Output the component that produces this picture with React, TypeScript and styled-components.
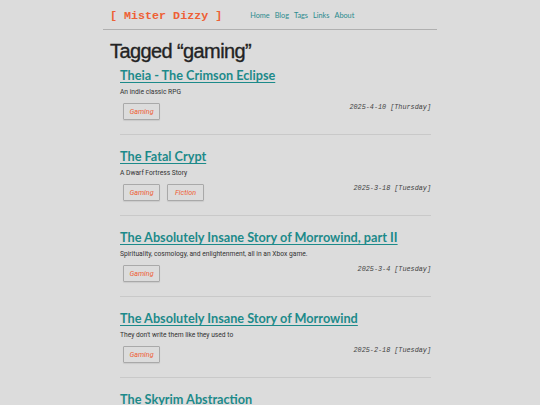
import React from "react";
import styled, { createGlobalStyle } from "styled-components";

const Global = createGlobalStyle`
  html, body { margin: 0; padding: 0; background: #dcdcdc; }
  body { font-family: "Liberation Sans", Arial, sans-serif; color: #222; }
`;

const Page = styled.div`
  width: 334px;
  margin: 0 auto;
`;

const Header = styled.header`
  display: flex;
  align-items: center;
  height: 30px;
  padding: 0 7px;
  border-bottom: 1px solid #b0b0b0;
  box-sizing: border-box;
`;

const Brand = styled.a`
  font-family: "Liberation Mono", "Courier New", monospace;
  font-weight: bold;
  font-size: 11.7px;
  color: #ee6035;
  text-decoration: none;
  white-space: pre;
  margin-top: 2px;
`;

const Nav = styled.nav`
  display: flex;
  gap: 5px;
  margin-left: 28px;
  margin-top: 2px;
`;

const NavLink = styled.a`
  font-family: "Lato", "Liberation Sans", sans-serif;
  font-size: 7.3px;
  color: #2b8b8e;
  text-decoration: none;
`;

const Heading = styled.h1`
  margin: 9px 0 0 7px;
  font-family: "Liberation Sans", Arial, sans-serif;
  font-size: 20px;
  font-weight: normal;
  letter-spacing: -0.6px;
  -webkit-text-stroke: 0.35px #232323;
  line-height: 24px;
  color: #232323;
`;

const List = styled.div`
  padding: 3px 6px 0 17px;
`;

const Post = styled.article`
  padding-bottom: 14px;
  border-bottom: 1px solid #c9c9c9;
  & + & { margin-top: 12px; }
`;

const Title = styled.a`
  display: inline-block;
  font-family: "Lato", "Liberation Sans", sans-serif;
  font-weight: bold;
  font-size: 12.7px;
  line-height: 18px;
  color: #1c8a8a;
  text-decoration: underline;
  text-underline-offset: 2px;
`;

const Sub = styled.p`
  margin: 4px 0 0;
  font-family: "Roboto", "Liberation Sans", sans-serif;
  font-size: 6.7px;
  line-height: 8px;
  min-height: 8px;
  color: #333;
`;

const Meta = styled.div`
  display: flex;
  justify-content: space-between;
  align-items: flex-start;
  margin-top: 7px;
  padding-left: 3px;
`;

const Tags = styled.div`
  display: flex;
  gap: 7px;
`;

const Tag = styled.a`
  display: flex;
  align-items: center;
  justify-content: center;
  width: 35px;
  height: 15px;
  border: 1px solid #a9a9a9;
  border-radius: 1px;
  box-shadow: 0 1px 1px rgba(0,0,0,0.08);
  font-family: "Roboto", "Liberation Sans", sans-serif;
  font-style: italic;
  font-size: 7.2px;
  color: #ee6035;
  text-decoration: none;
`;

const DateText = styled.span`
  font-family: "Liberation Mono", "Courier New", monospace;
  font-style: italic;
  font-size: 6.8px;
  line-height: 8px;
  color: #444;
  white-space: pre;
`;

const posts = [
  { title: "Theia - The Crimson Eclipse", sub: "An indie classic RPG", tags: ["Gaming"], date: "2025-4-10 [Thursday]" },
  { title: "The Fatal Crypt", sub: "A Dwarf Fortress Story", tags: ["Gaming", "Fiction"], date: "2025-3-18 [Tuesday]" },
  { title: "The Absolutely Insane Story of Morrowind, part II", sub: "Spirituality, cosmology, and enlightenment, all in an Xbox game.", tags: ["Gaming"], date: "2025-3-4 [Tuesday]" },
  { title: "The Absolutely Insane Story of Morrowind", sub: "They don't write them like they used to", tags: ["Gaming"], date: "2025-2-18 [Tuesday]" },
  { title: "The Skyrim Abstraction", sub: "", tags: ["Gaming"], date: "2025-2-4 [Tuesday]" },
];

export default function App() {
  return (
    <>
      <Global />
      <Page>
        <Header>
          <Brand href="#">[ Mister Dizzy ]</Brand>
          <Nav>
            {["Home", "Blog", "Tags", "Links", "About"].map((n) => (
              <NavLink key={n} href="#">{n}</NavLink>
            ))}
          </Nav>
        </Header>
        <Heading>Tagged “gaming”</Heading>
        <List>
          {posts.map((p) => (
            <Post key={p.title}>
              <Title href="#">{p.title}</Title>
              <Sub>{p.sub}</Sub>
              <Meta>
                <Tags>
                  {p.tags.map((t) => (
                    <Tag key={t} href="#">{t}</Tag>
                  ))}
                </Tags>
                <DateText>{p.date}</DateText>
              </Meta>
            </Post>
          ))}
        </List>
      </Page>
    </>
  );
}
